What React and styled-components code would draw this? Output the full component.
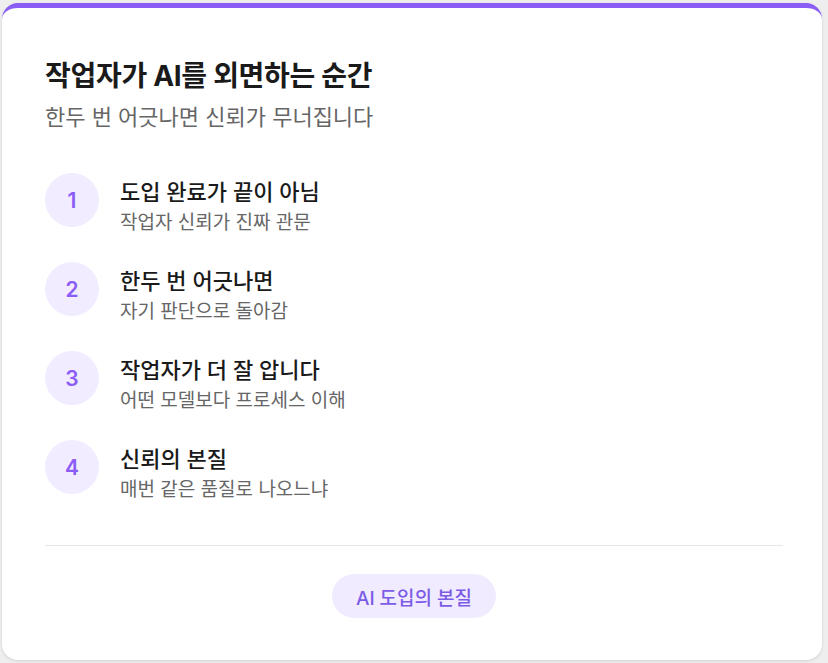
import React from 'react'
import styled, { createGlobalStyle } from 'styled-components'

const Global = createGlobalStyle`
  body {
    margin: 0;
    background: #eeeeef;
    font-family: Inter, "Noto Sans CJK KR", sans-serif;
  }
`

const Page = styled.div`
  padding: 3px 6px 3px 2px;
`

const Card = styled.div`
  height: 657px;
  box-sizing: border-box;
  background: #fff;
  border-radius: 16px;
  border-top: 5px solid #8b5cf6;
  box-shadow: 0 1px 3px rgba(0,0,0,0.12);
  padding: 50px 39px 0 43px;
  display: flex;
  flex-direction: column;
`

const Title = styled.h1`
  margin: 0;
  font-size: 28px;
  font-weight: 700;
  color: #1a1a1a;
  line-height: 36px;
  letter-spacing: -0.3px;
`

const Subtitle = styled.p`
  margin: 8px 0 0;
  font-size: 22px;
  color: #666;
  line-height: 30px;
`

const List = styled.div`
  margin-top: 41px;
  display: flex;
  flex-direction: column;
  gap: 25px;
`

const Item = styled.div`
  display: flex;
  align-items: flex-start;
  gap: 21px;
`

const Num = styled.div`
  width: 54px;
  height: 54px;
  border-radius: 50%;
  background: #f1ecff;
  color: #8b5cf6;
  font-size: 21px;
  font-weight: 600;
  display: flex;
  align-items: center;
  justify-content: center;
  flex-shrink: 0;
`

const Text = styled.div`
  margin-top: 4px;
`

const ItemTitle = styled.div`
  font-size: 22px;
  font-weight: 500;
  color: #1a1a1a;
  line-height: 30px;
`

const ItemSub = styled.div`
  margin-top: 2px;
  font-size: 19px;
  color: #666;
  line-height: 28px;
`

const Divider = styled.hr`
  margin: 41px 0 0;
  border: none;
  border-top: 1px solid #e8e8e8;
`

const Footer = styled.div`
  display: flex;
  justify-content: center;
  margin-top: 28px;
`

const Pill = styled.div`
  padding: 0 24px;
  height: 44px;
  border-radius: 22px;
  background: #f1ebff;
  color: #7c5ce6;
  font-size: 19px;
  font-weight: 500;
  display: flex;
  align-items: center;
`

const items = [
  ['도입 완료가 끝이 아님', '작업자 신뢰가 진짜 관문'],
  ['한두 번 어긋나면', '자기 판단으로 돌아감'],
  ['작업자가 더 잘 압니다', '어떤 모델보다 프로세스 이해'],
  ['신뢰의 본질', '매번 같은 품질로 나오느냐'],
]

export default function App() {
  return (
    <Page>
      <Global />
      <Card>
        <Title>작업자가 AI를 외면하는 순간</Title>
        <Subtitle>한두 번 어긋나면 신뢰가 무너집니다</Subtitle>
        <List>
          {items.map(([t, s], i) => (
            <Item key={i}>
              <Num>{i + 1}</Num>
              <Text>
                <ItemTitle>{t}</ItemTitle>
                <ItemSub>{s}</ItemSub>
              </Text>
            </Item>
          ))}
        </List>
        <Divider />
        <Footer>
          <Pill>AI 도입의 본질</Pill>
        </Footer>
      </Card>
    </Page>
  )
}
